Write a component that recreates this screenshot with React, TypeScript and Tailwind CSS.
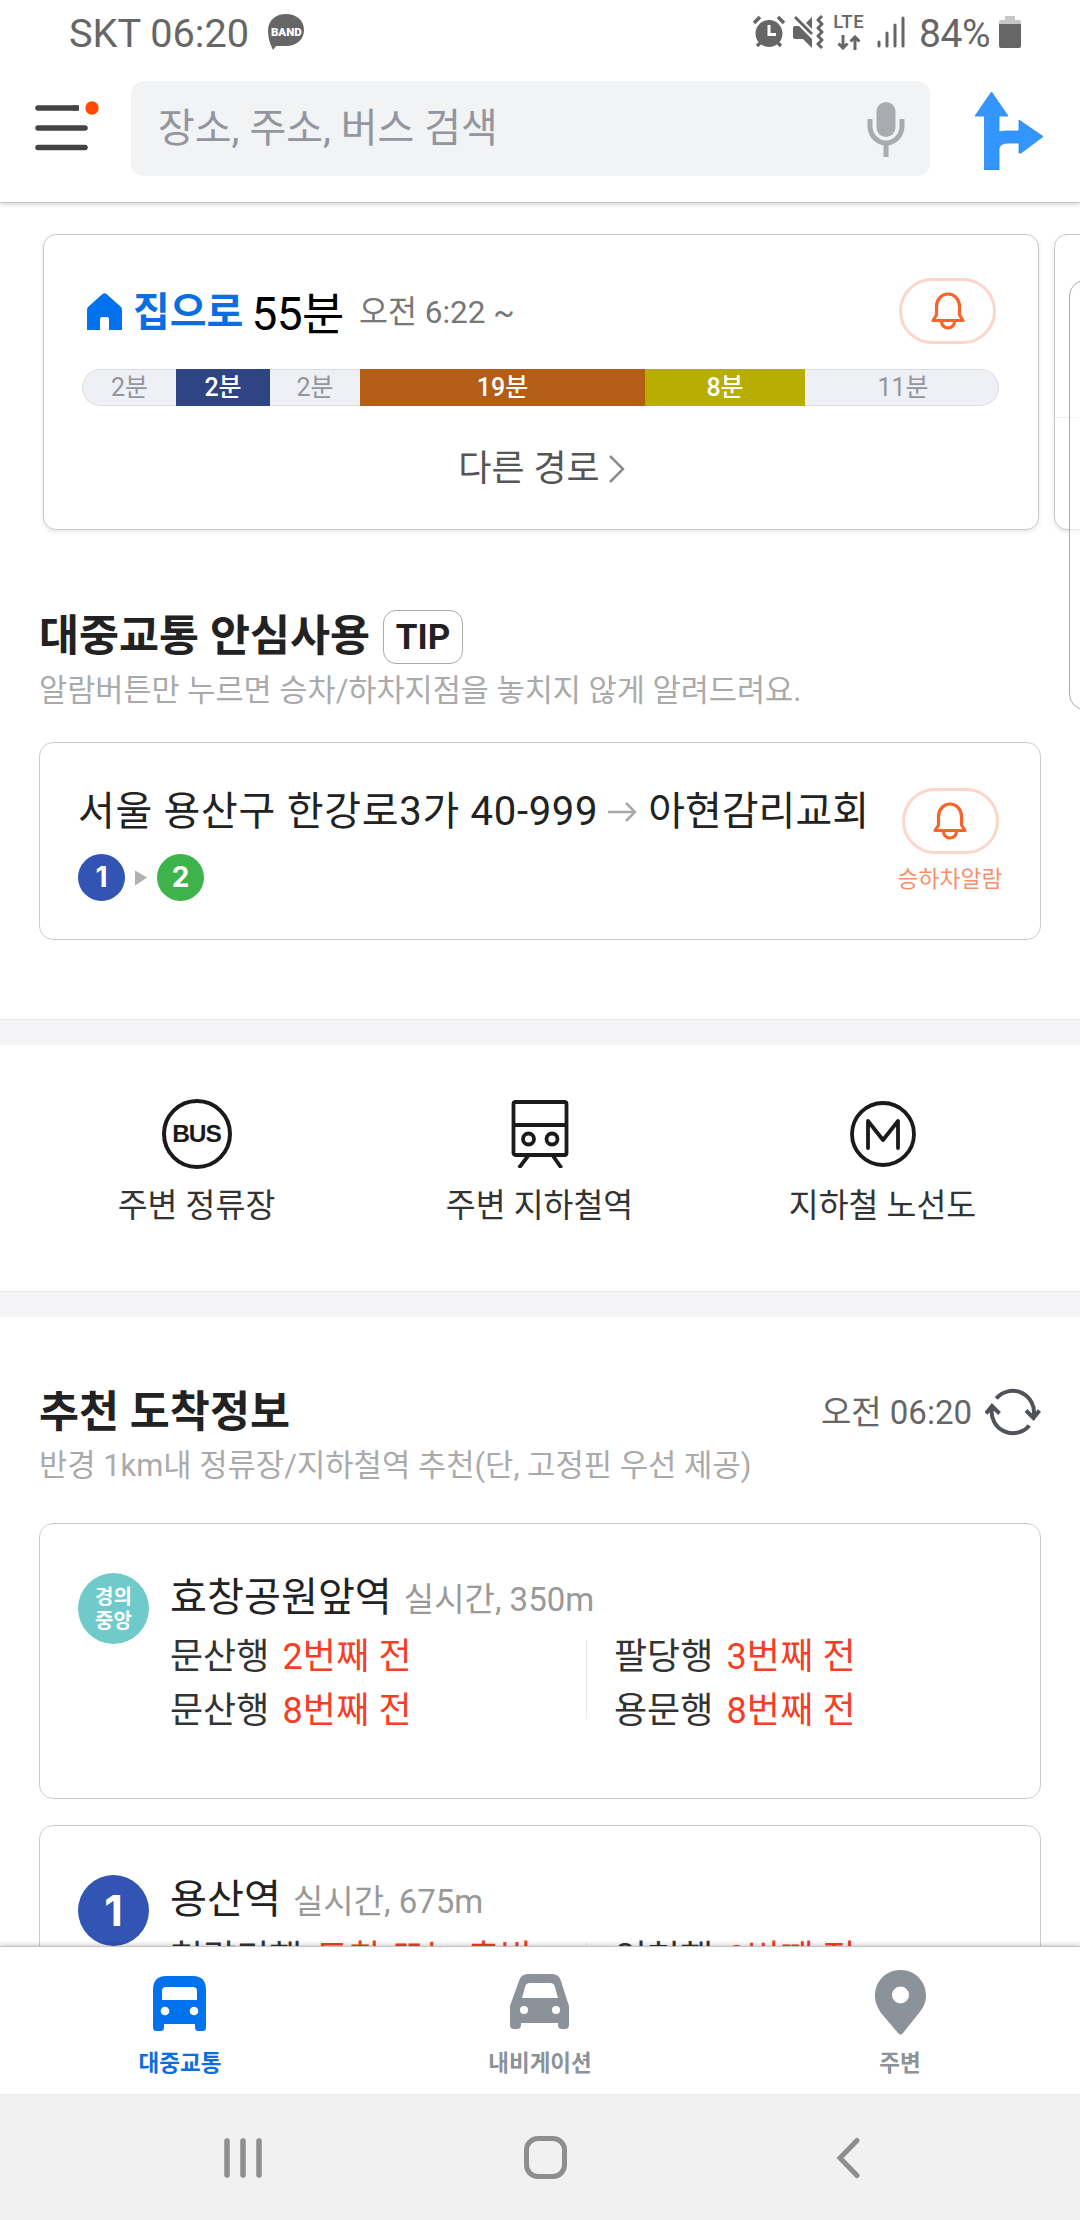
import type { ReactNode } from "react";

function StatusBar() {
  return (
    <div className="flex h-[66px] items-center pr-[59px] pl-[69px] text-[#666]">
      <span className="pt-px text-[39.700px] leading-[66px]">SKT 06:20</span>
      <svg className="mb-[3px] ml-[19px] h-[36px] w-[36px]" viewBox="0 0 36 36">
        <path
          d="M18 0C8 0 0 6 0 17c0 7 2 13 5 19 1-1 2-3 3-4 3 0 6 0 10 0 10 0 18-6 18-16S28 0 18 0z"
          fill="#666"
        />
        <text
          fill="#fff"
          fontFamily="Roboto, sans-serif"
          fontSize="11.5"
          fontWeight="900"
          textAnchor="middle"
          x="18.3"
          y="21.5"
        >
          BAND
        </text>
      </svg>
      <div className="ml-auto flex items-center">
        {/* alarm */}
        <svg className="mb-[2px] h-[34px] w-[34px]" fill="none" viewBox="0 0 34 34">
          <circle cx="17" cy="18.500" fill="#666" r="13.500" />
          <path d="M2 8l6-6M32 8l-6-6M5 31l5-5M29 31l-5-5" stroke="#666" strokeWidth="3.500" />
          <path d="M17 10v9.500h7" stroke="#fff" strokeWidth="3" />
        </svg>
        {/* muted speaker with vibration */}
        <svg className="mb-[2px] ml-[6px] h-[34px] w-[32px]" fill="none" viewBox="0 0 32 34">
          <path d="M3 11h4l13 13v9l-9-9H3q-2 0-2-2v-9q0-2 2-2z" fill="#666" />
          <path d="M20 2v12l-6-6z" fill="#666" />
          <path d="M3 2l17 17" stroke="#666" strokeWidth="3" />
          <path
            d="M30 1l-4 4 4 4-4 4 4 4-4 4 4 4-4 4 4 4"
            stroke="#666"
            strokeLinejoin="round"
            strokeWidth="3"
          />
        </svg>
        <div className="mb-[2px] ml-[9px] flex flex-col items-center">
          <span className="font-medium text-[18.500px] leading-[15px] tracking-[0.5px]">LTE</span>
          <svg className="mt-[5px] h-[15px] w-[24px]" fill="none" viewBox="0 0 24 15">
            <path
              d="M6 0v13M1.500 8.500L6 13l4.500-4.500M18 15V2M13.500 6.500L18 2l4.500 4.500"
              stroke="#666"
              strokeWidth="3"
            />
          </svg>
        </div>
        <svg className="mb-[2px] ml-[13px] h-[32px] w-[28px]" viewBox="0 0 28 32">
          <path
            d="M2 26v4M10 17v13M18 9v21M26 2v28"
            stroke="#666"
            strokeLinecap="round"
            strokeWidth="3"
          />
        </svg>
        <span className="ml-[14px] pt-px text-[39px] leading-[66px] tracking-[-0.5px]">84%</span>
        <svg className="mb-[2px] ml-[9px] h-[34px] w-[22px]" viewBox="0 0 22 34">
          <path d="M6 1h10v4h4q2 0 2 2v3H0V7q0-2 2-2h4z" fill="#c6c6c6" />
          <path d="M0 9h22v22q0 2-2 2H2q-2 0-2-2z" fill="#666" />
        </svg>
      </div>
    </div>
  );
}

function SearchHeader() {
  return (
    <div className="flex h-[136px] items-start pt-[15px] pr-[37px] pl-[35px]">
      <svg className="mt-[18px] h-[52px] w-[64px]" viewBox="0 0 64 52">
        <path
          d="M3 9h37M3 29h47M3 48.500h47"
          stroke="#444"
          strokeLinecap="round"
          strokeWidth="5.500"
        />
        <path d="M38 9h6" stroke="#444" strokeWidth="5.500" />
        <circle cx="57" cy="9" fill="#ff4800" r="6.700" />
      </svg>
      <div className="ml-[32px] flex h-[95px] w-[799px] items-center rounded-[13px] bg-[#f1f3f5] pr-[25px] pl-[27px]">
        <span className="text-[#93969f] text-[40px] leading-[48px]">장소, 주소, 버스 검색</span>
        <svg className="ml-auto h-[56px] w-[38px]" fill="none" viewBox="0 0 38 56">
          <rect fill="#aaabb1" height="35" rx="9.500" width="19" x="9.500" y="1" />
          <path d="M3 18v7a16 17 0 0 0 32 0v-7" stroke="#aaabb1" strokeWidth="5" />
          <path d="M19 42v14" stroke="#aaabb1" strokeWidth="5" />
        </svg>
      </div>
      <svg className="mt-[11px] ml-auto h-[78px] w-[68px]" viewBox="0 0 68 78">
        <path
          d="M16.500 0L33 24h-9v16q3-1 8-1h12V28l24 16.500L46 61h-2V51H33q-7 0-9 5v22H9.500V24H0z"
          fill="#3395ff"
          stroke="#2a85e8"
          strokeWidth="0.800"
        />
      </svg>
    </div>
  );
}

function BellPill() {
  return (
    <div className="flex h-[66px] w-[97px] items-center justify-center rounded-full border-[#fdd5c9] border-[3px]">
      <svg className="h-[38px] w-[34px]" fill="none" viewBox="0 0 34 38">
        <path
          d="M2 28.500h30l-3.500-5.500V14.500a11.500 12.500 0 0 0-23 0V23z"
          stroke="#f96428"
          strokeLinejoin="round"
          strokeWidth="3.200"
        />
        <path d="M10.500 29.500a6.500 6.500 0 0 0 13 0" stroke="#f96428" strokeWidth="3.200" />
      </svg>
    </div>
  );
}

const segments = [
  { label: "2분", className: "w-[94px] rounded-l-full border-l border-y border-[#dcdde2] bg-[#eff0f6] text-[#92959c]" },
  { label: "2분", className: "w-[94px] bg-[#2f4482] font-medium text-white" },
  { label: "2분", className: "w-[90px] border-y border-[#dcdde2] bg-[#eff0f6] text-[#92959c]" },
  { label: "19분", className: "w-[285px] bg-[#b45e15] font-medium text-white" },
  { label: "8분", className: "w-[160px] bg-[#b8ae02] font-medium text-white" },
  { label: "11분", className: "w-[194px] rounded-r-full border-r border-y border-[#dcdde2] bg-[#eff0f6] pl-[3px] text-[#92959c]" },
];

function RouteCarousel() {
  return (
    <div className="flex gap-[15px] overflow-hidden pt-[31px] pb-[8px] pl-[43px]">
      <div className="h-[296px] w-[996px] shrink-0 rounded-[13px] border border-[#c9c9cb] pt-[43px] pl-[38px] shadow-[0_2px_4px_rgba(0,0,0,0.1)]">
        <div className="flex h-[66px] items-center pr-[42px]">
          <svg className="ml-[5px] h-[37px] w-[35px]" viewBox="0 0 35 37">
            <path
              d="M15.500 1q2-1.500 4 0L34 14q1 1 1 3v20H22V26q0-2-2-2h-5q-2 0-2 2v11H0V17q0-2 1-3z"
              fill="#0072ee"
            />
          </svg>
          <span className="mt-[4px] ml-[11px] font-bold text-[#0a6ee0] text-[40px] leading-[66px]">집으로</span>
          <span className="mt-[5px] ml-[8px] text-[46px] text-black leading-[66px] tracking-[-0.5px]">55분</span>
          <span className="mt-[4px] ml-[15px] text-[#777] text-[31.500px] leading-[66px]">오전 6:22 ~</span>
          <div className="ml-auto">
            <BellPill />
          </div>
        </div>
        <div className="mt-[25px] flex h-[37px]">
          {segments.map((s, i) => (
            <div
              className={`flex items-center justify-center text-[25px] leading-[36px] ${s.className}`}
              key={i}
            >
              {s.label}
            </div>
          ))}
        </div>
        <div className="mt-[38px] flex h-[50px] items-center justify-center pr-[37px] text-[#555] text-[36px] leading-[50px]">
          다른 경로
          <svg className="ml-[8px] h-[28px] w-[17px]" fill="none" viewBox="0 0 17 28">
            <path d="M2 1l13 13L2 27" stroke="#8c8c8c" strokeWidth="2.500" />
          </svg>
        </div>
      </div>
      <div className="h-[296px] w-[996px] shrink-0 rounded-[13px] border border-[#c9c9cb] shadow-[0_2px_4px_rgba(0,0,0,0.1)]">
        <div className="h-[183px] border-[#ececec] border-b" />
      </div>
    </div>
  );
}

function AlarmSection() {
  return (
    <section className="px-[39px] pt-[71px]">
      <div className="flex h-[55px] items-center">
        <h2 className="font-bold text-[#222] text-[43.500px] leading-[55px]">대중교통 안심사용</h2>
        <span className="ml-[13px] flex h-[54px] w-[80px] items-center justify-center rounded-[13px] border border-[#aaa] pt-[3px] font-bold text-[#222] text-[35px]">
          TIP
        </span>
      </div>
      <p className="mt-[5px] text-[#aaa] text-[30.600px] leading-[44px]">
        알람버튼만 누르면 승차/하차지점을 놓치지 않게 알려드려요.
      </p>
      <div className="mt-[29px] flex h-[198px] justify-between rounded-[14px] border border-[#cdcdcf] pt-[44px] pr-[37px] pl-[38px]">
        <div>
          <div className="flex h-[50px] items-center whitespace-nowrap text-[#222] text-[40px] leading-[50px]">
            <span className="tracking-[0.700px]">서울 용산구 한강로3가 40-999</span>
            <svg className="mr-[11px] ml-[10px] h-[20px] w-[29px]" fill="none" viewBox="0 0 29 20">
              <path d="M0 10h27M18 1l9 9-9 9" stroke="#a9a9a9" strokeWidth="2.500" />
            </svg>
            아현감리교회
          </div>
          <div className="mt-[17px] flex h-[47px] items-center">
            <span className="flex size-[47px] items-center justify-center rounded-full bg-[#3254b2] font-[Inter] font-bold text-[28px] text-white leading-[47px]">
              1
            </span>
            <svg className="mx-[10px] h-[16px] w-[12px]" viewBox="0 0 12 16">
              <path d="M0 1q0-1 1 0l11 6.500L1 15q-1 1-1 0z" fill="#b0b0b0" />
            </svg>
            <span className="flex size-[47px] items-center justify-center rounded-full bg-[#3eb34a] font-[Inter] font-bold text-[28px] text-white leading-[47px]">
              2
            </span>
          </div>
        </div>
        <div className="flex w-[106px] flex-col items-center pt-px">
          <BellPill />
          <span className="mt-[10px] whitespace-nowrap text-[#f98e6c] text-[22.800px] leading-[32px]">
            승하차알람
          </span>
        </div>
      </div>
    </section>
  );
}

function Divider() {
  return <div className="h-[26px] border-[#e7e7ea] border-t bg-[#f5f5f8]" />;
}

function Shortcut({ icon, label }: { icon: ReactNode; label: string }) {
  return (
    <div className="flex w-[343px] flex-col items-center">
      <div className="flex h-[72px] items-center">{icon}</div>
      <span className="mt-[14px] text-[#333] text-[32.500px] leading-[44px]">{label}</span>
    </div>
  );
}

function Shortcuts() {
  return (
    <div className="flex h-[246px] pt-[53px] pl-[25px]">
      <Shortcut
        icon={
          <span className="flex size-[70px] items-center justify-center rounded-full border-[#1a1a1a] border-[4px] font-['Liberation_Sans'] font-bold text-[#1a1a1a] text-[24.500px] tracking-[-1px]">
            BUS
          </span>
        }
        label="주변 정류장"
      />
      <Shortcut
        icon={
          <svg
            className="h-[68px] w-[58px]"
            fill="none"
            stroke="#1a1a1a"
            strokeWidth="3.800"
            viewBox="0 0 58 68"
          >
            <rect height="53" rx="2" width="53" x="2.500" y="2" />
            <path d="M2 25h54M17 56l-9 12M42 56l8.500 12" />
            <circle cx="17.500" cy="39" r="5.500" />
            <circle cx="41" cy="39" r="5.500" />
          </svg>
        }
        label="주변 지하철역"
      />
      <Shortcut
        icon={
          <svg
            className="h-[66px] w-[66px]"
            fill="none"
            stroke="#1a1a1a"
            strokeWidth="3.800"
            viewBox="0 0 66 66"
          >
            <circle cx="33" cy="33" r="31" />
            <path d="M18 47V20l15 19 15-19v27" strokeLinecap="round" strokeLinejoin="round" />
          </svg>
        }
        label="지하철 노선도"
      />
    </div>
  );
}

type Arrival = { dest: string; status: string };

type StationCardProps = {
  badge: ReactNode;
  name: string;
  info: string;
  left: Arrival[];
  right: Arrival[];
};

function ArrivalRows({ rows }: { rows: Arrival[] }) {
  return (
    <div>
      {rows.map((r, i) => (
        <div className="flex h-[54px] items-center text-[36px] leading-[54px]" key={i}>
          <span className="text-[#333]">{r.dest}</span>
          <span className="ml-[13px] text-[#f53e26] tracking-[0.200px]">{r.status}</span>
        </div>
      ))}
    </div>
  );
}

function StationCard({ badge, name, info, left, right }: StationCardProps) {
  return (
    <div className="flex h-[276px] shrink-0 rounded-[14px] border border-[#cdcdcf] pt-[49px] pl-[38px]">
      {badge}
      <div className="ml-[21px]">
        <div className="flex h-[50px] items-baseline">
          <span className="text-[#222] text-[40.200px] leading-[50px]">{name}</span>
          <span className="ml-[12px] text-[#999] text-[33px] leading-[50px]">{info}</span>
        </div>
        <div className="mt-[7px] flex">
          <div className="w-[416px]">
            <ArrivalRows rows={left} />
          </div>
          <div className="mt-[10px] h-[79px] w-px bg-[#e8e8e8]" />
          <div className="ml-[27px]">
            <ArrivalRows rows={right} />
          </div>
        </div>
      </div>
    </div>
  );
}

function RecommendSection() {
  return (
    <section className="px-[39px] pt-[68px]">
      <div className="flex h-[55px] items-center">
        <h2 className="font-bold text-[#222] text-[43.500px] leading-[55px]">추천 도착정보</h2>
        <span className="ml-auto text-[#666] text-[33px] leading-[55px]">오전 06:20</span>
        <svg
          className="mb-[2px] ml-[13px] h-[48px] w-[56px]"
          fill="none"
          stroke="#505357"
          strokeWidth="4"
          viewBox="0 0 56 48"
        >
          <path d="M11.300 10.500A21.300 21.300 0 0 1 48.600 28M41 22.500l7.500 7.500 6-7.500" />
          <path d="M44.300 37.500A21.300 21.300 0 0 1 7 20M1 25.500L7 18l7.500 7.500" />
        </svg>
      </div>
      <p className="mt-[4px] text-[#aaa] text-[30.800px] leading-[44px]">
        반경 1km내 정류장/지하철역 추천(단, 고정핀 우선 제공)
      </p>
      <div className="mt-[35px] flex flex-col gap-[26px]">
        <StationCard
          badge={
            <span className="flex size-[71px] flex-col items-center justify-center rounded-full bg-[#6fcbca] font-bold text-[20px] text-white leading-[24px]">
              <span>경의</span>
              <span>중앙</span>
            </span>
          }
          info="실시간, 350m"
          left={[
            { dest: "문산행", status: "2번째 전" },
            { dest: "문산행", status: "8번째 전" },
          ]}
          name="효창공원앞역"
          right={[
            { dest: "팔당행", status: "3번째 전" },
            { dest: "용문행", status: "8번째 전" },
          ]}
        />
        <StationCard
          badge={
            <span className="flex size-[71px] items-center justify-center rounded-full bg-[#3254b2] font-[Inter] font-bold text-[43px] text-white leading-[71px]">
              1
            </span>
          }
          info="실시간, 675m"
          left={[{ dest: "청량리행", status: "도착 또는 출발" }]}
          name="용산역"
          right={[{ dest: "인천행", status: "8번째 전" }]}
        />
      </div>
    </section>
  );
}

function TabItem({ icon, label, className }: { icon: ReactNode; label: string; className: string }) {
  return (
    <div className={`flex flex-1 flex-col items-center pt-[23px] ${className}`}>
      {icon}
      <span className="mt-[12px] font-bold text-[22.500px] leading-[32px]">{label}</span>
    </div>
  );
}

function TabBar() {
  return (
    <nav className="relative flex h-[148px] shrink-0 border-[#c4c4c4] border-t bg-white shadow-[0_-2px_4px_rgba(0,0,0,0.16)]">
      <TabItem
        className="text-[#0a6ee0]"
        icon={
          <svg className="h-[65px] w-[54px]" viewBox="0 0 54 65">
            <path
              d="M13 6h27q13 0 13 14v37q0 4-3 4h-5q-3 0-3-4v-3H11v3q0 4-3 4H3q-3 0-3-4V20Q0 6 13 6z"
              fill="#0072ee"
            />
            <path d="M13 17h27q4 0 4 4v9H9v-9q0-4 4-4z" fill="#fff" />
            <circle cx="12" cy="41" fill="#fff" r="4.300" />
            <circle cx="41" cy="41" fill="#fff" r="4.300" />
          </svg>
        }
        label="대중교통"
      />
      <TabItem
        className="text-[#8b9299]"
        icon={
          <svg className="h-[65px] w-[60px]" viewBox="0 0 60 65">
            <path
              d="M18 4h24q7 0 9 7l7 22q1 2 1 4v18q0 4-4 4h-3q-4 0-4-4v-2H11v2q0 4-4 4H4q-4 0-4-4V37q0-2 1-4L9 11q2-7 9-7z"
              fill="#8b9299"
            />
            <path d="M20 13h20q4 0 5 4l3 11H12l3-11q1-4 5-4z" fill="#fff" />
            <circle cx="14" cy="40" fill="#fff" r="4" />
            <circle cx="46" cy="40" fill="#fff" r="4" />
          </svg>
        }
        label="내비게이션"
      />
      <TabItem
        className="text-[#8b9299]"
        icon={
          <svg className="h-[65px] w-[51px]" viewBox="0 0 51 65">
            <path
              d="M25.500 0C11 0 0 11 0 26c0 7 3 12 6 17l17 20q2.500 3 5 0l16-20c4-5 7-10 7-17C51 11 40 0 25.500 0z"
              fill="#8b9299"
            />
            <circle cx="25.500" cy="25" fill="#fff" r="8.500" />
          </svg>
        }
        label="주변"
      />
    </nav>
  );
}

function SystemNav() {
  return (
    <div className="flex h-[126px] shrink-0 items-center bg-[#f1f1f1] pt-px pr-[219px] pl-[223px]">
      <svg className="h-[42px] w-[40px]" viewBox="0 0 40 42">
        <path
          d="M4 4v34M20 4v34M36 4v34"
          stroke="#8e8e8e"
          strokeLinecap="round"
          strokeWidth="5.500"
        />
      </svg>
      <div className="ml-[261px] size-[43px] rounded-[14px] border-[#8e8e8e] border-[5px]" />
      <svg className="ml-auto h-[42px] w-[25px]" fill="none" viewBox="0 0 25 42">
        <path
          d="M21 3.500L4 21l17 17.500"
          stroke="#8e8e8e"
          strokeLinecap="round"
          strokeWidth="5"
        />
      </svg>
    </div>
  );
}

export default function App() {
  return (
    <div className="relative flex h-[2220px] w-[1080px] flex-col overflow-hidden bg-white font-[Roboto,'Noto_Sans_CJK_KR',sans-serif]">
      <header className="relative shrink-0 border-[#c8c8c8] border-b shadow-[0_2px_4px_rgba(0,0,0,0.16)]">
        <StatusBar />
        <SearchHeader />
      </header>
      <main className="min-h-0 flex-1 overflow-hidden">
        <RouteCarousel />
        <AlarmSection />
        <div className="h-[79px]" />
        <Divider />
        <Shortcuts />
        <Divider />
        <RecommendSection />
      </main>
      <TabBar />
      <SystemNav />
      {/* edge panel handle */}
      <div className="absolute top-[280px] right-[-30px] h-[430px] w-[41px] rounded-[16px] border border-[#aaa] bg-white/60" />
    </div>
  );
}
